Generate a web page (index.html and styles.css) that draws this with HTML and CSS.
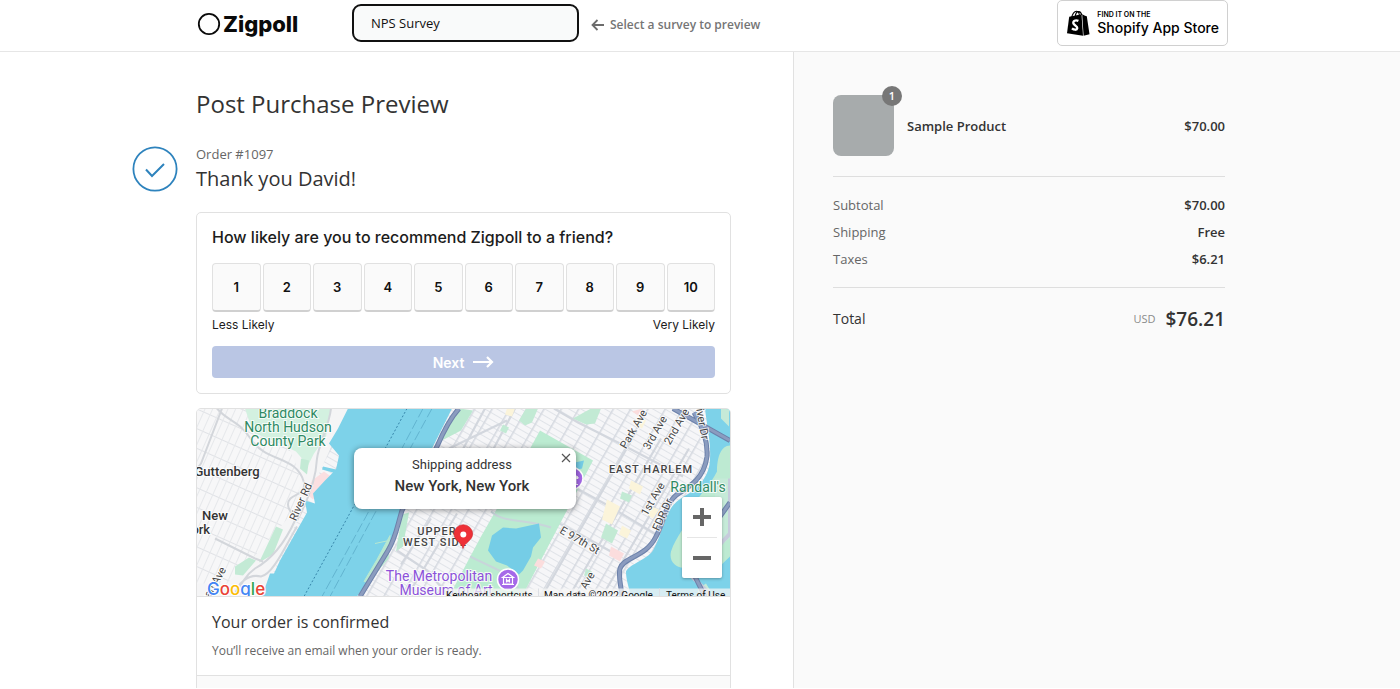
FILE: index.html
```html
<!DOCTYPE html>
<html lang="en">
<head>
<meta charset="utf-8">
<meta name="viewport" content="width=device-width, initial-scale=1">
<title>Post Purchase Preview</title>
<link rel="stylesheet" href="styles.css">
</head>
<body>
<header class="topbar">
  <a class="logo" href="#" aria-label="Zigpoll">
    <svg width="24" height="24" viewBox="0 0 24 24" aria-hidden="true"><circle cx="12" cy="12" r="10.2" fill="none" stroke="#0a0a0a" stroke-width="1.8"/></svg>
    <span>Zigpoll</span>
  </a>
  <select class="survey-select" aria-label="Survey">
    <option>NPS Survey</option>
  </select>
  <p class="hint">
    <svg width="14" height="14" viewBox="0 0 14 14" aria-hidden="true"><path d="M13 7H2M6.500 2 1.500 7l5 5" fill="none" stroke="#6c6c6c" stroke-width="1.800"/></svg>
    Select a survey to preview
  </p>
  <a class="shopify" href="#">
    <svg width="24" height="27" viewBox="0 0 24 27" aria-hidden="true">
      <path d="M3.200 6.800 15.500 4.200 17 25.800 1 23.200z" fill="#000"/>
      <path d="M16.200 4.300 19 5.800 20.800 6.200 23.500 24.200 17.600 25.700z" fill="#000"/>
      <path d="M5.500 8.500C6 4 8.500 1 10.600 1.200c2 .2 2.800 2.800 2.900 5M9.200 7c.2-3 1.700-5.500 3.600-5.400 1.800.2 2.700 1.900 3 3.600" fill="none" stroke="#000" stroke-width="1.100"/>
      <path d="M12.400 10.900c-3-1.400-5.600.2-5 2.500.5 2 4.200 2.400 3.900 4.800-.3 2.200-3.500 1.800-5.300.2" fill="none" stroke="#fff" stroke-width="2.300"/>
    </svg>
    <span class="shopify-text"><small>FIND IT ON THE</small><span>Shopify App Store</span></span>
  </a>
</header>

<div class="page">
  <main class="checkout">
    <div class="column">
      <h1>Post Purchase Preview</h1>
      <div class="thanks">
        <svg class="check" width="46" height="46" viewBox="0 0 46 46" aria-hidden="true"><circle cx="23" cy="23" r="21.600" fill="none" stroke="#2e83bd" stroke-width="1.800"/><path d="m14 23.500 6 6.500L32 18" fill="none" stroke="#2e83bd" stroke-width="2"/></svg>
        <div>
          <p class="order">Order #1097</p>
          <h2>Thank you David!</h2>
        </div>
      </div>

      <section class="card survey">
        <h3>How likely are you to recommend Zigpoll to a friend?</h3>
        <div class="scale">
          <button>1</button><button>2</button><button>3</button><button>4</button><button>5</button><button>6</button><button>7</button><button>8</button><button>9</button><button>10</button>
        </div>
        <div class="ends"><span>Less Likely</span><span>Very Likely</span></div>
        <button class="next">Next
          <svg width="21" height="14" viewBox="0 0 21 14" aria-hidden="true"><path d="M0 7h19M14 2l5 5-5 5" fill="none" stroke="#fff" stroke-width="2.200"/></svg>
        </button>
      </section>

      <section class="card status">
        <div class="map">
          <svg class="tiles" viewBox="0 0 533 188" preserveAspectRatio="xMidYMid slice" role="img" aria-label="Map of New York">
            <defs>
              <pattern id="nyc" width="15" height="6" patternUnits="userSpaceOnUse" patternTransform="rotate(30)">
                <rect width="15" height="6" fill="#f6f6f8"/><path d="M0 .5h15" stroke="#e0e3e8"/><path d="M.8 0v6" stroke="#d6dae1" stroke-width="1.600"/>
              </pattern>
              <pattern id="jersey" width="7" height="18" patternUnits="userSpaceOnUse" patternTransform="rotate(24)">
                <rect width="7" height="18" fill="#f7f7f8"/><path d="M0 .5h7" stroke="#e0e2e6"/><path d="M.5 0v18" stroke="#e6e8eb"/>
              </pattern>
            </defs>
            <rect width="533" height="188" fill="url(#nyc)"/>
            <path d="M0 0h152L65 188H0z" fill="#f5f5f6"/>
            <path d="M0 0h75l30 70-10 35-35 40-30 30H0z" fill="url(#jersey)"/>
            <path d="M48 0h86l-5 28-12 17-6 12-12-14-21-10-22-9z" fill="#d3f1e0"/>
            <path d="m79 118 7 3-10 25-14 8zM38 158l14-9 7 3-13 15-8-1zM104 50l8 2-2 14-7-6z" fill="#c3ead5"/>
            <path d="m115 72 12-9 7 5-9 15-9 8-7-6z" fill="#fbdfe1"/>
            <g fill="none" stroke="#d3d6db" stroke-width="2">
              <path d="M25 0 4 55 0 60M20 0c12 14 20 10 35 32s45 15 52 42c2 15-16 10-16 22 0 9 9 10 6 14M134 0c-2 18-12 35-14 50-1 20-8 40-20 62M98 112c-10 22-22 38-40 48-10 7-14 16-20 28M18 130l40 20 8 3M38 188c2-14 14-23 26-20 12-2 24-30 36-50"/>
            </g>
            <path d="M151 0h104L236 38l-31 64-13 38-8 14-24 34H65l8-23h4l6-13 27-48-2-12 10 3-2-10 12-13 8-8-11-3 1-3 13 3 3-14-10-12 9-15z" fill="#7dd2e9"/>
            <path d="m178 135 14-3M180 151l13-24-2 23-20 24-4-1z" stroke="#b8e8d0" fill="#b8e8d0"/>
            <path d="M210 0 150 110 107 188" fill="none" stroke="#3786aa" stroke-dasharray="2 2"/>
            <path d="m226 0-57 108-44 80M235 0l-60 110-42 78" fill="none" stroke="#62b4d0" stroke-dasharray="10 3"/>
            <path d="m263 0 13 2-12 20-19 10-5 6zM205 106l7-2-6 34-7 5z" fill="#bce9d1"/>
            <g fill="none" stroke="#d3d7de" stroke-width="2.200">
              <path d="m288 0-38 70M318 0l-24 45M357 0l24 14 40 20 65 34M252 40l58-28M200 142l30 20 22 26M234 110l-30 46M260 105l-50 83M440 22 345 188M464 30l-92 158M492 40l-87 148M325 50l86 47 50 30M335 100l88 48"/>
            </g>
            <path d="M343 22 396 52 325 188h-73l32-60 16-28z" fill="#bbebd1"/>
            <path d="M294 103c13 12 35 7 60 16M273 148l42 20 10 20" fill="none" stroke="#c8d5da" stroke-width="2"/>
            <path d="m295 127 11-8 13 1 23-5 2 14-8 10-2 9-8 14-4 4-12-9-11-4-8-11z" fill="#75cde6"/>
            <path d="m378 54 9-2-2 8-9 2z" fill="#75cde6"/>
            <path d="M329 0h12l-6 14-7 3-6-5zM306 16l6 3-3 6-6-3zM409 115l12 7-6 13-11-6zM376 10l18-10h10l-6 15-9 1zM389 160l6 3-3 6-5-2zM425 83l10 4-3 7-9-4zM350 50l9 5-4 7-8-4z" fill="#c2ead4"/>
            <path d="m414 138 13 7-4 8-11-6zM435 3l10-3-4 7zM341 150l7 3-4 7-7-3z" fill="#fbdddd"/>
            <path d="m410 91 13 7-8 18-10-5zM434 72l12 6-3 8-11-6zM425 117l9 5-4 8-8-4zM318 0h-8l-2 6 7 2zM454 98l8 3-6 9-6-4zM441 8l8 4-4 8-7-4z" fill="#fbf4da"/>
            <path d="M508 0h25v188h-99c-3-12-5-18-5-25 3-7 21-12 27-21 5-9 8-18 10-26 4-14 12-23 21-28 13-7 26-20 26-38 1-15-3-32-5-50z" fill="#7dd2e9"/>
            <path d="M533 37c-9 0-13 12-13 26-7 14-17 23-23 33-4 18-18 31-23 47-3 12 9 19 17 15l14-6 8 15 20-19z" fill="#bdead2"/>
            <path d="M518 70h15v60l-15 10zM501 180l8-5 8 13h-16zM532 0v18l-8-8V0z" fill="#c5ead8"/>
            <path d="M533 70v55l-25 27M495 168l20 20" fill="none" stroke="#c7cbdc" stroke-width="4"/>
            <g fill="none" stroke="#6c81aa" stroke-width="5">
              <path d="M262 0c-10 11-16 24-22 38L205 102c-5 16-6 27-14 40l-28 46M497 4c8 13 14 28 13 44-3 22-17 30-30 38-12 9-13 28-21 42-10 21-32 20-36 32-2 8 1 16 2 28M476 0l57 32M533 94l-20 28-18 40 13 26"/>
            </g>
            <g fill="none" stroke="#8b9cbf" stroke-width="3">
              <path d="M262 0c-10 11-16 24-22 38L205 102c-5 16-6 27-14 40l-28 46M497 4c8 13 14 28 13 44-3 22-17 30-30 38-12 9-13 28-21 42-10 21-32 20-36 32-2 8 1 16 2 28M476 0l57 32M533 94l-20 28-18 40 13 26"/>
            </g>
            <g class="place green"><text x="91" y="9">Braddock</text><text x="91" y="23">North Hudson</text><text x="91" y="37">County Park</text><text x="501" y="83">Randall's</text></g>
            <g class="place town"><text x="30" y="67">Guttenberg</text><text x="18" y="111">New</text><text x="0" y="125">York</text></g>
            <g class="place area"><text x="240" y="126">UPPER</text><text x="238" y="137">WEST SIDE</text><text x="454" y="64">EAST HARLEM</text></g>
            <g class="place museum"><text x="242" y="172">The Metropolitan</text><text x="249" y="186">Museum of Art</text></g>
            <g class="place road">
              <text transform="translate(99 113) rotate(-66)">River Rd</text>
              <text transform="translate(429 41) rotate(-60)">Park Ave</text>
              <text transform="translate(452 42) rotate(-60)">3rd Ave</text>
              <text transform="translate(473 37) rotate(-60)">2nd Ave</text>
              <text transform="translate(498 -6) rotate(80)">River Dr</text>
              <text transform="translate(450 108) rotate(-60)">1st Ave</text>
              <text transform="translate(462 123) rotate(-66)">FDR Dr</text>
              <text transform="translate(362 124) rotate(30)">E 97th St</text>
              <text transform="translate(385 189) rotate(-60)">k Ave</text>
              <text transform="translate(10 195) rotate(-60)">gan Ave</text>
            </g>
            <g>
              <circle cx="375" cy="70" r="11" fill="#a569e8" stroke="#fff" stroke-width="1.500"/>
              <path d="m375 65 6 3.500v1.500h-12v-1.500zM373 70v6M379 70v6M370 76h11" fill="#fff" stroke="#fff"/>
              <circle cx="311" cy="171" r="10.500" fill="#a569e8" stroke="#fff" stroke-width="1.500"/>
              <path d="m305.500 169 5.500-4 5.500 4zM306.500 169v6.500h9V169M305 176h12M309.500 174v-3l1.500 2 1.500-2v3" fill="none" stroke="#fff" stroke-width="1.200"/>
            </g>
            <path d="M266 140c-1-6-9-8-9-14.500a9.300 9.300 0 0 1 18.600 0C275.600 132 267.500 134 266 140z" fill="#ee3037" stroke="#c9252c" stroke-width=".6"/>
            <circle cx="266.300" cy="126" r="3" fill="#fff"/>
            <rect x="248" y="180" width="285" height="8" fill="#f5f5f5" fill-opacity=".75"/>
            <path d="M341.500 180v8M462.500 180v8" stroke="#dcdfe5"/>
            <text class="google" x="10" y="186"><tspan fill="#4285f4">G</tspan><tspan fill="#ea4335">o</tspan><tspan fill="#fbbc05">o</tspan><tspan fill="#4285f4">g</tspan><tspan fill="#34a853">l</tspan><tspan fill="#ea4335">e</tspan></text>
            <g class="legal"><text x="249" y="190">Keyboard shortcuts</text><text x="347" y="190">Map data ©2022 Google</text><text x="469" y="190">Terms of Use</text></g>
          </svg>
          <div class="popup">
            <button class="close" aria-label="Close"><svg width="10" height="10" viewBox="0 0 10 10"><path d="m1 1 8 8M9 1 1 9" stroke="#555" stroke-width="1.200"/></svg></button>
            <p>Shipping address</p>
            <strong>New York, New York</strong>
          </div>
          <div class="zoom">
            <button aria-label="Zoom in"><svg width="18" height="18" viewBox="0 0 18 18"><path d="M9 0v18M0 9h18" stroke="#666" stroke-width="4"/></svg></button>
            <button aria-label="Zoom out"><svg width="18" height="18" viewBox="0 0 18 18"><path d="M0 9h18" stroke="#666" stroke-width="4"/></svg></button>
          </div>
        </div>
        <div class="confirmed">
          <h3>Your order is confirmed</h3>
          <p>You’ll receive an email when your order is ready.</p>
        </div>
        <div class="more"></div>
      </section>
    </div>
  </main>

  <aside class="sidebar">
    <div class="summary">
      <div class="product">
        <div class="thumb"><span class="badge">1</span></div>
        <strong>Sample Product</strong>
        <strong class="price">$70.00</strong>
      </div>
      <dl class="lines">
        <div><dt>Subtotal</dt><dd>$70.00</dd></div>
        <div><dt>Shipping</dt><dd>Free</dd></div>
        <div><dt>Taxes</dt><dd>$6.21</dd></div>
      </dl>
      <div class="total"><span>Total</span><span class="sum"><small>USD</small><strong>$76.21</strong></span></div>
    </div>
  </aside>
</div>
</body>
</html>
```

FILE: styles.css
```css
* { box-sizing: border-box; }
body {
  margin: 0;
  height: 100vh;
  overflow: hidden;
  display: flex;
  flex-direction: column;
  background: #fff;
  color: #333;
  font-family: "Open Sans", "Noto Sans", sans-serif;
  font-size: 13px;
}
h1, h2, h3, p, dl, dd { margin: 0; font-weight: 400; }
button { font: inherit; padding: 0; border: 0; cursor: pointer; }
svg { display: block; flex: none; }

.topbar {
  flex: none;
  display: flex;
  align-items: center;
  height: 52px;
  padding: 0 172px 5px 197px;
  border-bottom: 1px solid #e6e6e6;
}
.logo {
  display: flex;
  align-items: center;
  gap: 2px;
  width: 155px;
  padding-top: 2px;
  color: #0a0a0a;
  text-decoration: none;
  font: 800 22px/28px Inter, sans-serif;
}
.survey-select {
  appearance: none;
  width: 227px;
  height: 38px;
  padding: 0 17px;
  border: 2px solid #111;
  border-radius: 9px;
  background: #f9fafa;
  color: #111;
  font: 400 13px "Open Sans", sans-serif;
}
.hint {
  display: flex;
  align-items: center;
  gap: 5px;
  margin-left: 12px;
  padding-top: 3px;
  color: #757575;
  font-size: 12px;
  font-weight: 600;
}
.shopify {
  display: flex;
  align-items: center;
  gap: 7px;
  height: 46px;
  margin-left: auto;
  padding: 0 8px;
  border: 1px solid #d0d0d0;
  border-radius: 5px;
  color: #000;
  text-decoration: none;
  font: 500 14px/17px Inter, sans-serif;
}
.shopify-text { display: flex; flex-direction: column; }
.shopify small { font-size: 7px; line-height: 9px; font-weight: 600; }

.page { flex: 1; min-height: 0; display: grid; grid-template-columns: 793fr 607fr; padding-bottom: 1px; }
.checkout { padding: 32px 62px 0 24px; overflow: hidden; }
.column { max-width: 535px; margin-left: auto; }
h1 { font-size: 24px; line-height: 40px; }
.thanks { display: flex; gap: 18px; margin: 22px 0 16px -64px; }
.order { color: #666; line-height: 16px; }
h2 { font-size: 20px; line-height: 34px; }

.card { border: 1px solid #e1e1e1; border-radius: 5px; background: #fff; overflow: hidden; }
.survey { padding: 14px 15px 15px; margin-bottom: 14px; font-family: Inter, sans-serif; color: #1c1c1c; }
.survey h3 { font-size: 16px; line-height: 20px; font-weight: 500; }
.scale { display: grid; grid-template-columns: repeat(10, 1fr); gap: 2px; margin-top: 16px; }
.scale button {
  height: 49px;
  border: 1px solid #e1e1e1;
  border-bottom: 2px solid #d0d0d0;
  border-radius: 4px;
  background: #fafafa;
  color: #111;
  font-weight: 600;
}
.ends { display: flex; justify-content: space-between; line-height: 18px; margin: 4px 0 12px; font-size: 12px; }
.next {
  display: flex;
  align-items: center;
  justify-content: center;
  gap: 9px;
  width: 100%;
  height: 32px;
  border-radius: 4px;
  background: #bac6e4;
  color: #fff;
  font-size: 14px;
  font-weight: 600;
}

.map { position: relative; height: 188px; border-bottom: 1px solid #e1e1e1; overflow: hidden; }
.tiles { width: 100%; height: 100%; font-family: Roboto, sans-serif; }
.place { paint-order: stroke; stroke: #fff; stroke-width: 2px; stroke-opacity: .8; }
.green { fill: #2f8a63; font-size: 14px; text-anchor: middle; }
.town { fill: #333; font-size: 13px; font-weight: 500; text-anchor: middle; }
.area { fill: #444; font-weight: 500; font-size: 11px; letter-spacing: 1px; text-anchor: middle; }
.museum { fill: #8c52d9; font-size: 14px; text-anchor: middle; }
.road { fill: #444; font-size: 11px; }
.google { font: 500 17px Inter, sans-serif; paint-order: stroke; stroke: #fff; stroke-width: 2px; }
.legal { fill: #111; font-size: 10px; }
.popup {
  position: absolute;
  top: 39px;
  left: 50%;
  width: 222px;
  height: 61px;
  margin-left: -110px;
  padding: 8px 5px 0 0;
  border-radius: 8px;
  background: #fff;
  box-shadow: 0 1px 6px rgba(0, 0, 0, .45);
  text-align: center;
  font: 13px/18px Roboto, sans-serif;
}
.popup strong { display: block; font-size: 15px; line-height: 24px; font-weight: 500; }
.close { position: absolute; top: 5px; right: 5px; background: none; }
.zoom {
  position: absolute;
  right: 8px;
  bottom: 18px;
  width: 40px;
  padding: 0 5px;
  border-radius: 2px;
  background: #fff;
  box-shadow: 0 1px 3px rgba(0, 0, 0, .3);
}
.zoom button { display: flex; justify-content: center; align-items: center; width: 100%; height: 40px; background: none; }
.zoom button + button { height: 41px; border-top: 1px solid #e6e6e6; }
.confirmed { padding: 13px 15px 15px; }
.confirmed h3 { font-size: 16px; line-height: 24px; }
.confirmed p { margin-top: 8px; color: #666; line-height: 18px; font-size: 12px; }
.more { height: 60px; border-top: 1px solid #e1e1e1; background: #fafafa; }

.sidebar { padding: 43px 24px 0 39px; border-left: 1px solid #e1e1e1; background: #fafafa; }
.summary { max-width: 392px; }
.product { display: flex; align-items: center; gap: 13px; padding-bottom: 20px; }
.product strong { font-weight: 600; }
.thumb { position: relative; width: 61px; height: 61px; border-radius: 8px; background: #a7abac; }
.badge {
  position: absolute;
  top: -9px;
  right: -8px;
  width: 20px;
  height: 20px;
  border-radius: 10px;
  background: #777;
  color: #fff;
  text-align: center;
  font-size: 11px;
  line-height: 20px;
  font-weight: 600;
}
.price { margin-left: auto; }
.lines { padding: 15px 0 14px; border: solid #dedede; border-width: 1px 0; }
.lines div { display: flex; justify-content: space-between; line-height: 27px; }
dt { color: #666; }
dd { font-weight: 600; }
.total { display: flex; justify-content: space-between; align-items: center; padding-top: 15px; line-height: 32px; font-size: 14px; }
.sum { display: flex; align-items: center; gap: 10px; }
.sum small { color: #8a8a8a; font-size: 11px; }
.sum strong { font-size: 19px; font-weight: 600; }
```
